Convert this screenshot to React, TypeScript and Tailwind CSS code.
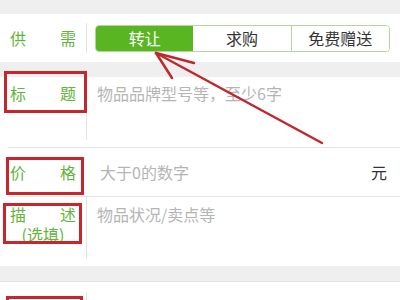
const font = "font-['Noto_Sans_CJK_SC','Noto_Sans',sans-serif]";

function Label({ a, b }: { a: string; b: string }) {
  return (
    <div className="w-[86px] shrink-0 flex justify-between px-[10px] text-[16px] leading-[22px] text-[#62b53a]">
      <span>{a}</span>
      <span>{b}</span>
    </div>
  );
}

function Divider({ className = '' }: { className?: string }) {
  return <div className={`w-px self-stretch bg-[#e2e2e2] ${className}`} />;
}

function Segmented() {
  const items = ['转让', '求购', '免费赠送'];
  return (
    <div className="ml-[8px] flex w-[295px] h-[27px] rounded-[4px] border border-[#b3d79a] overflow-hidden">
      {items.map((t, i) => (
        <div
          key={t}
          className={`flex-1 flex items-center justify-center text-[16px] ${
            i === 0 ? 'bg-[#5ab522] text-white' : 'bg-white text-[#333]'
          } ${i === 2 ? 'border-l border-[#b3d79a]' : ''}`}
        >
          {t}
        </div>
      ))}
    </div>
  );
}

export default function App() {
  return (
    <div className={`relative w-[400px] h-[300px] overflow-hidden bg-[#efefef] ${font}`}>
      <div className="h-[14px]" />
      <div className="h-[48px] bg-white flex items-center">
        <Label a="供" b="需" />
        <Divider className="my-[9px]" />
        <Segmented />
      </div>
      <div className="h-[15px]" />
      <div className="bg-white">
        <div className="h-[70px] flex items-start">
          <div className="pt-[5px]">
            <Label a="标" b="题" />
          </div>
          <Divider className="mb-[7px]" />
          <div className="pt-[5px] pl-[10px] text-[16px] leading-[22px] text-[#b5b5b5]">物品品牌型号等，至少6字</div>
        </div>
        <div className="ml-[8px] h-px bg-[#e2e2e2]" />
        <div className="h-[48px] flex items-center">
          <Label a="价" b="格" />
          <div className="flex-1 pl-[14px] text-[16px] text-[#b5b5b5]">大于0的数字</div>
          <div className="pr-[13px] text-[16px] text-[#333]">元</div>
        </div>
        <div className="ml-[8px] h-px bg-[#e2e2e2]" />
        <div className="h-[69px] flex items-start">
          <div className="pt-[6px] w-[86px] shrink-0">
            <Label a="描" b="述" />
            <div className="text-center text-[16px] leading-[18px] text-[#62b53a]">(选填)</div>
          </div>
          <Divider className="mb-[7px]" />
          <div className="pt-[6px] pl-[10px] text-[16px] leading-[22px] text-[#b5b5b5]">物品状况/卖点等</div>
        </div>
      </div>
      <div className="h-[16px] border-b border-[#e2e2e2]" />
      <div className="h-[40px] bg-white flex">
        <div className="w-[86px]" />
        <Divider className="mt-[10px]" />
      </div>

      <div className="absolute left-[4px] top-[71px] w-[83px] h-[42px] border-[3px] border-[#c6262c]" />
      <div className="absolute left-[6px] top-[157px] w-[78px] h-[38px] border-[3px] border-[#c6262c]" />
      <div className="absolute left-[3px] top-[203px] w-[79px] h-[41px] border-[3px] border-[#c6262c]" />
      <div className="absolute left-[6px] top-[296px] w-[77px] h-[20px] border-[3px] border-[#c6262c]" />

      <svg className="absolute left-0 top-0" width="400" height="300" viewBox="0 0 400 300">
        <g stroke="#c1272d" strokeWidth="2.5" strokeLinecap="round" fill="none">
          <line x1="156" y1="53" x2="322" y2="143" />
          <line x1="156" y1="53" x2="194" y2="63" />
          <line x1="156" y1="53" x2="172" y2="78" />
        </g>
      </svg>
    </div>
  );
}
